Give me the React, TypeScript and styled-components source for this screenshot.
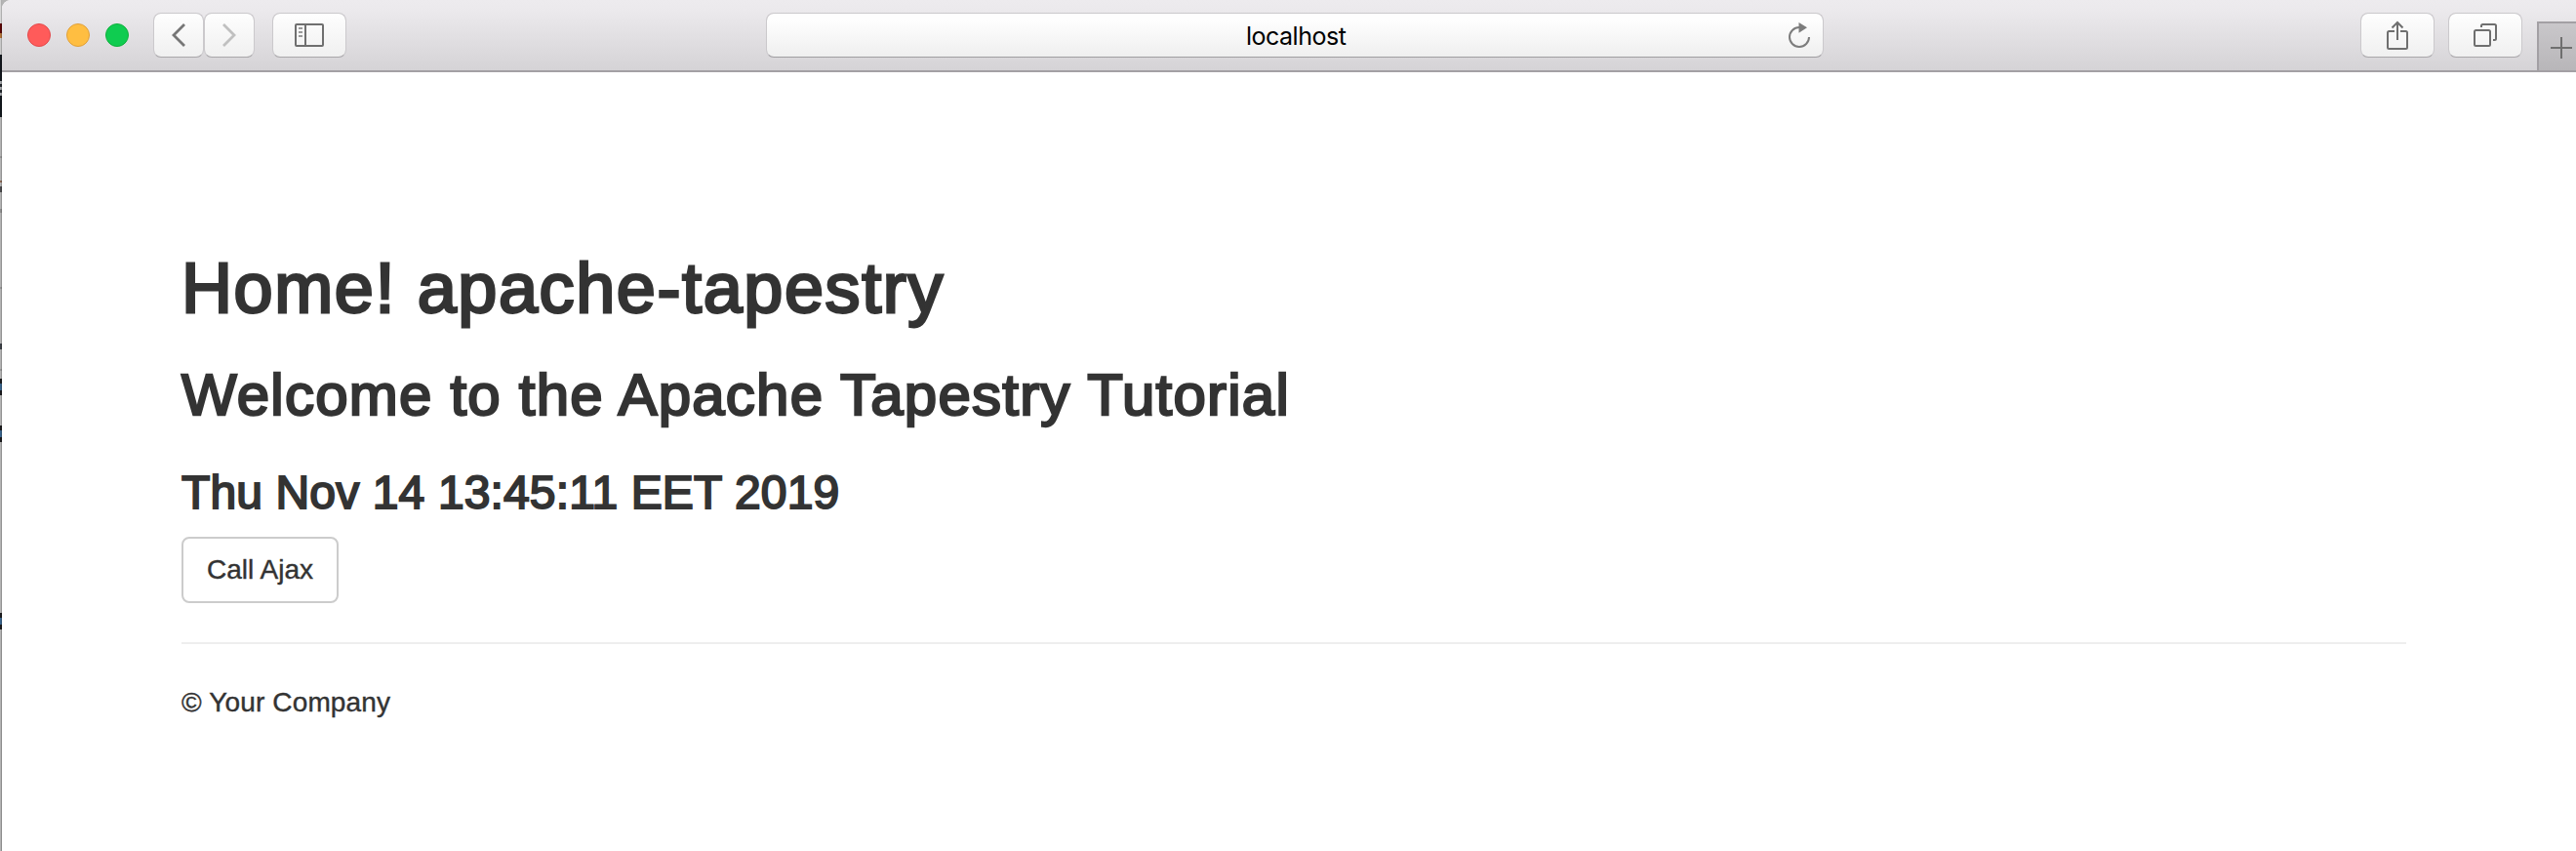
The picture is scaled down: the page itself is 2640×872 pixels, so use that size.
import React from "react";
import styled, { createGlobalStyle } from "styled-components";

const GlobalStyle = createGlobalStyle`
  * { box-sizing: border-box; }
  body { margin: 0; background: #fff; overflow: hidden; }
`;

const Screen = styled.div`
  display: flex;
  width: 2640px;
  height: 872px;
  background: #b4b4b4;
`;

/* Sliver of the desktop that shows beside the window */
const Backdrop = styled.div`
  display: flex;
  flex-direction: column;
  flex: none;
  width: 2px;
  box-shadow: inset -1px 0 rgba(0, 0, 0, 0.22);
`;

const Slice = styled.div<{ $h: number; $color: string }>`
  flex: none;
  height: ${(p) => p.$h}px;
  background: ${(p) => p.$color};
  box-shadow: inset -1px 0 rgba(0, 0, 0, 0.18);
`;

const Window = styled.div`
  display: flex;
  flex-direction: column;
  flex: 1;
  background: #fff;
  border-top-left-radius: 9px;
  overflow: hidden;
`;

const Toolbar = styled.header`
  display: flex;
  flex: none;
  align-items: flex-start;
  height: 74px;
  padding: 13px 0 0 26px;
  background: linear-gradient(#edebee, #ebe9ec 16%, #d5d3d6);
  border-bottom: 2px solid #a3a0a4;
`;

const Lights = styled.div`
  display: flex;
  gap: 16px;
  padding-top: 11px;
`;

const Light = styled.span<{ $fill: string; $edge: string }>`
  width: 24px;
  height: 24px;
  border-radius: 50%;
  background: ${(p) => p.$fill};
  border: 1px solid ${(p) => p.$edge};
`;

const NavGroup = styled.div`
  display: flex;
  gap: 0;
  margin-left: 25px;
`;

const ToolButton = styled.button<{ $w: number; $ml?: number }>`
  display: flex;
  align-items: center;
  justify-content: center;
  flex: none;
  width: ${(p) => p.$w}px;
  height: 46px;
  margin: 0 0 0 ${(p) => p.$ml ?? 0}px;
  padding: 0;
  border: 1px solid #cbc9cc;
  border-bottom-color: #a9a7aa;
  border-radius: 8px;
  background: linear-gradient(#fefefe, #f0f0f0);
  background-clip: padding-box;
`;

const Address = styled.div`
  display: flex;
  align-items: center;
  flex: none;
  width: 1084px;
  height: 46px;
  margin-left: 430px;
  padding: 0 13px 0 491px;
  border: 1px solid #cbc9cc;
  border-bottom-color: #a09ea1;
  border-radius: 8px;
  background: linear-gradient(#fefefe 15%, #efefef);
  background-clip: padding-box;
`;

const Host = styled.span`
  flex: 1;
  padding-top: 3px;
  color: #000;
  font: 400 25px/41px Inter, sans-serif;
  letter-spacing: -0.5px;
`;

const NewTab = styled.div`
  display: flex;
  flex: 1;
  height: 50px;
  margin: 9px 0 0 15px;
  padding: 14px 0 0 12px;
  background: linear-gradient(#c9c7ca, #b8b6b9);
  border: solid #a3a0a4;
  border-width: 2px 0 0 2px;
`;

const Icon = styled.svg<{ $stroke?: string; $weight?: number }>`
  display: block;
  flex: none;
  overflow: visible;
  fill: none;
  stroke: ${(p) => p.$stroke ?? "#6f6f6f"};
  stroke-width: ${(p) => p.$weight ?? 2};
`;

const Page = styled.main`
  display: flex;
  flex-direction: column;
  align-items: flex-start;
  padding: 181px 174px 0 184px;
  color: #333;
  font-family: "Liberation Sans", Arial, sans-serif;
`;

const Heading = styled.h1<{ $size: number; $line: number; $stroke: number; $track: number; $mb: number }>`
  margin: 0 0 ${(p) => p.$mb}px;
  font-size: ${(p) => p.$size}px;
  line-height: ${(p) => p.$line}px;
  font-weight: 400;
  letter-spacing: ${(p) => p.$track}px;
  white-space: nowrap;
  -webkit-text-stroke: ${(p) => p.$stroke}px #333;
`;

const AjaxButton = styled.button`
  width: 161px;
  height: 68px;
  padding: 0;
  border: 2px solid #ccc;
  border-radius: 8px;
  background: #fff;
  color: #333;
  font: 400 28px/64px "Liberation Sans", Arial, sans-serif;
  letter-spacing: 0;
  -webkit-text-stroke: 0.4px #333;
`;

const Rule = styled.hr`
  width: 100%;
  height: 2px;
  margin: 40px 0 40px;
  border: 0;
  background: #eee;
`;

const Footer = styled.p`
  margin: 0;
  font-size: 28px;
  line-height: 40px;
  letter-spacing: 0.15px;
  -webkit-text-stroke: 0.4px #333;
`;

const slices: [number, string][] = [
  [24, "#d6d6d6"], [10, "#5c0505"], [5, "#b3743a"], [17, "#c9c9c9"],
  [27, "#12171d"], [3, "#a5a8ab"], [3, "#24292e"], [3, "#a5a8ab"], [3, "#24292e"], [3, "#a5a8ab"],
  [22, "#12171d"], [40, "#b4b4b4"], [2, "#969696"], [23, "#b4b4b4"], [2, "#8b6a55"], [4, "#b4b4b4"],
  [6, "#4c4c4e"], [17, "#b4b4b4"], [4, "#909090"], [76, "#b4b4b4"], [2, "#969696"], [56, "#b4b4b4"],
  [6, "#3c4046"], [20, "#b4b4b4"], [2, "#989898"], [8, "#b4b4b4"],
  [5, "#1c1c1e"], [7, "#3a648c"], [5, "#1c1c1e"], [31, "#b4b4b4"],
  [5, "#1c1c1e"], [7, "#3a648c"], [5, "#1c1c1e"], [175, "#b4b4b4"],
  [5, "#1c1c1e"], [7, "#3a648c"], [5, "#1c1c1e"],
];

export default function App() {
  return (
    <Screen>
      <GlobalStyle />
      <Backdrop>
        {slices.map(([h, color], i) => (
          <Slice key={i} $h={h} $color={color} />
        ))}
      </Backdrop>
      <Window>
        <Toolbar>
          <Lights>
            <Light $fill="#ff5b5a" $edge="#e2494b" />
            <Light $fill="#ffbe41" $edge="#e0a03a" />
            <Light $fill="#0fcc50" $edge="#0fb03c" />
          </Lights>
          <NavGroup>
            <ToolButton $w={52} aria-label="Back">
              <Icon $stroke="#767676" $weight={2.8} width="14" height="24" viewBox="0 0 14 24">
                <path d="M13 1 2 12l11 11" />
              </Icon>
            </ToolButton>
            <ToolButton $w={52} aria-label="Forward">
              <Icon $stroke="#c0c0c0" $weight={2.8} width="14" height="24" viewBox="0 0 14 24">
                <path d="m1 1 11 11L1 23" />
              </Icon>
            </ToolButton>
          </NavGroup>
          <ToolButton $w={76} $ml={18} aria-label="Sidebar">
            <Icon width="30" height="24" viewBox="0 0 30 24">
              <rect x="1" y="1" width="28" height="22" rx="1" />
              <path d="M11 1v22" />
              <path d="M4 5h4M4 9h4M4 13h4" stroke="#9a9a9a" />
            </Icon>
          </ToolButton>
          <Address>
            <Host>localhost</Host>
            <Icon $stroke="#7c7c7c" width="22" height="26" viewBox="0 0 22 26">
              <path d="M11 5a10 10 0 1 0 10 10" />
              <path d="M10.500 0 19 5.300l-8.500 5.500z" fill="#7c7c7c" stroke="none" />
            </Icon>
          </Address>
          <ToolButton $w={76} $ml={550} aria-label="Share">
            <Icon width="22" height="30" viewBox="0 0 22 30">
              <path d="M8 11H2.500Q1 11 1 12.500V27.500Q1 29 2.500 29h17q1.500 0 1.500-1.500v-15Q21 11 19.500 11H14M11 20V2M5.500 7.500 11 2l5.500 5.500" />
            </Icon>
          </ToolButton>
          <ToolButton $w={76} $ml={14} aria-label="Tabs">
            <Icon width="24" height="24" viewBox="0 0 24 24">
              <rect x="1" y="7" width="16" height="16" rx="1.500" />
              <path d="M8 4V2.500Q8 1 9.500 1H21.500Q23 1 23 2.500V15.500Q23 17 21.500 17H20" />
            </Icon>
          </ToolButton>
          <NewTab>
            <Icon width="22" height="22" viewBox="0 0 22 22">
              <path d="M11 0v22M0 11h22" />
            </Icon>
          </NewTab>
        </Toolbar>
        <Page>
          <Heading $size={72} $line={80} $stroke={2.8} $track={1.6} $mb={37}>
            Home! apache-tapestry
          </Heading>
          <Heading as="h2" $size={60} $line={66} $stroke={2.4} $track={1.22} $mb={41}>
            Welcome to the Apache Tapestry Tutorial
          </Heading>
          <Heading as="h3" $size={48} $line={52} $stroke={2} $track={0.13} $mb={19}>
            Thu Nov 14 13:45:11 EET 2019
          </Heading>
          <AjaxButton>Call Ajax</AjaxButton>
          <Rule />
          <Footer>© Your Company</Footer>
        </Page>
      </Window>
    </Screen>
  );
}
